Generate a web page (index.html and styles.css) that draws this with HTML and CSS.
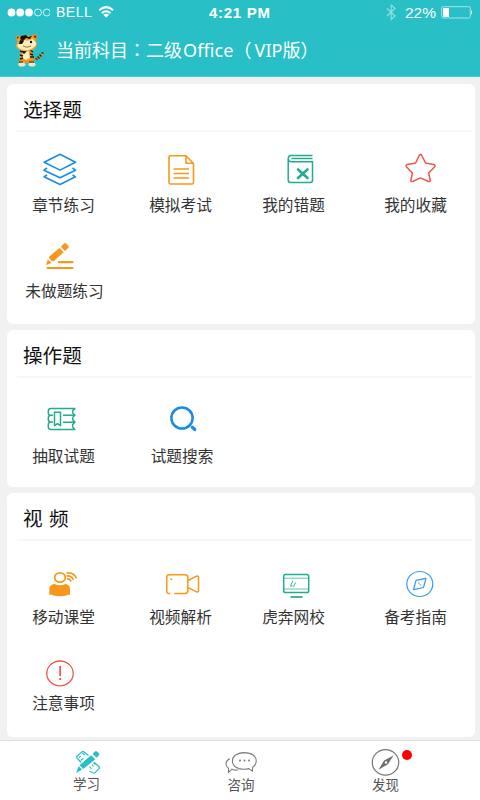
FILE: index.html
```html
<!DOCTYPE html>
<html lang="zh-CN">
<head>
<meta charset="utf-8">
<title>学习</title>
<link rel="stylesheet" href="styles.css">
</head>
<body>
<header class="header">
  <div class="status">
    <svg class="signal" viewBox="0 0 50 24" fill="#fff"><circle cx="11.500" cy="12.500" r="3.900"/><circle cx="20.200" cy="12.500" r="3.900"/><circle cx="29" cy="12.500" r="3.900"/><g fill="none" stroke="#fff" stroke-width=".8"><circle cx="38" cy="12.500" r="3.500"/><circle cx="46.800" cy="12.500" r="3.500"/></g></svg>
    <span class="carrier">BELL</span>
    <svg class="wifi" viewBox="98 0 18 24"><path d="M99.200 10.200q7-6.200 14 0M101.800 13.200q4.200-4 8.800 0" fill="none" stroke="#fff" stroke-width="2"/><path d="M103.300 14.800q2.900-2.200 5.800 0l-2.900 3z" fill="#fff"/></svg>
    <span class="time">4:21 PM</span>
    <svg class="bluetooth" viewBox="385 0 12 24"><path d="M387 8.500l8 7.500-3.800 3.500V5l3.800 3.500-8 7.500" fill="none" stroke="#8edfe3" stroke-width="1.200"/></svg>
    <span class="percent">22%</span>
    <svg class="battery" viewBox="440 0 34 24"><rect x="441.700" y="6.700" width="28.600" height="11.300" rx="1.500" fill="none" stroke="#a4e5e8"/><rect x="443" y="8" width="6" height="9" fill="#fff"/><path d="M471 10q2.300 2.300 0 4.500z" fill="#fff"/></svg>
  </div>
  <div class="subject">
    <svg class="mascot" viewBox="14 32 32 36">
      <path d="M34 59q4 1 9.500-6" fill="none" stroke="#e88a20" stroke-width="2"/><path d="M35.500 58.500l2 1m0-3l2 2m0-4l2 2m0-4l2 1" stroke="#261a10" stroke-width="1.300"/>
      <path d="M21 49h10l3 14H19z" fill="#ed9424"/><path d="M22.500 50h6l1.500 8-4 2-3.500-2z" fill="#fff0c0"/>
      <path d="M20 51l3 1m-3 3l3 1m-3 3l3-1m7-8l3 2m-3 2l3 1m-3 2l4 0m-12-7l2 3 3-3" stroke="#21160f" stroke-width="1.500"/>
      <ellipse cx="21.800" cy="64.500" rx="3.600" ry="2" fill="#f5e4c1"/><ellipse cx="32" cy="64.500" rx="3.600" ry="2" fill="#f5e4c1"/><path d="M19 62l4 0m6 0l5 0" stroke="#382010" stroke-width="1.200"/>
      <circle cx="18" cy="37.800" r="2.500" fill="#ec9323"/><circle cx="34.500" cy="37" r="3" fill="#ec9323"/><circle cx="18" cy="37.800" r="1.200" fill="#694522"/><circle cx="35" cy="37" r="1.400" fill="#694522"/>
      <path d="M18 38q8-6 17 0l2 6q-1 6-9 7-10 1-12-5z" fill="#f4a335"/><path d="M17 45q5-2 8-5 3 2 7-1 5 3 4 6-5 6-12 5-6-1-7-5z" fill="#ffefbc"/>
      <path d="M21 36l5-1 2 2 4-1-2 3-4-1-3 3-3-2zm-1 4l4 1-2 3h-3z" fill="#17110d"/><circle cx="31" cy="42" r="1.200" fill="#17110d"/><path d="M23 46q4 2.500 8 0" fill="none" stroke="#81502b" stroke-width=".8"/>
    </svg>
    <h1>当前科目<span class="punct" lang="zh-TW">：</span>二级<span class="latin">Office</span><span class="punct open" lang="zh-TW">（</span><span class="latin">VIP</span>版<span class="punct close" lang="zh-TW">）</span></h1>
  </div>
</header>

<main class="content">
  <section class="card card-choice">
    <h2>选择题</h2>
    <div class="grid">
      <div class="item"><svg viewBox="34 150 60 40" class="blue"><path d="M60 154.300l15.500 8-15.500 7.800-15.800-7.800zM47 168l-3 2.200 16 7.500 15.500-7.500-3-2.200M47 174.800l-3 2 16 7.700 15.500-7.700-3-2" stroke-width="1.600"/></svg><span>章节练习</span></div>
      <div class="item"><svg viewBox="151 150 60 40" class="orange"><path d="M186 155.700h-15.500q-1.500 0-1.500 1.500V182.500q0 1.500 1.500 1.500h21.500q1.500 0 1.500-1.500v-19zM186 155.700v7.600h7.500M173.500 169h15.500M173.500 173.500h15.500M173.500 178h15.500" stroke-width="1.600"/></svg><span>模拟考试</span></div>
      <div class="item"><svg viewBox="264 150 60 40" class="green"><path d="M312.500 155.600h-21q-3.300 0-3.300 3.300V180q0 2.500 2.500 2.500h19.600q2.200 0 2.200-2.200v-18.600h-21q-3.300 0-3.300-3M312.500 158.600h-21" stroke-width="1.500"/><path d="M298 169.500l9.500 8.500m0-8.500l-9.500 8.500" stroke-width="2.600" stroke-linecap="round"/></svg><span>我的错题</span></div>
      <div class="item"><svg viewBox="386 150 60 40" class="red"><path d="M419.200 155.500q1.300-2 2.600 0l3.700 7.500 8.300 1.500q2.100.8.700 2.400l-5.800 6.100 1.500 7.500q0 1.500-1.700 1l-8-3.600-8 3.600q-1.700.5-1.700-1l1.600-7.500-5.800-6.100q-1.400-1.600.7-2.400l8.300-1.500z" stroke-width="1.500"/></svg><span>我的收藏</span></div>
      <div class="item"><svg viewBox="34 236 60 40" class="orange"><g fill="#f7981d" stroke="none"><path d="M60.800 246.800l3.300-3.300q1-1 2 0l2.200 2.200q1 1 0 2l-3.300 3.300zM59.500 248l4.200 4.200-9.600 8.600q-1.200 1-2.500 0l-2.200-2.200q-1-1.200.2-2.400zM47.800 259.500l3.800 3.400-5.600 2z"/></g><path d="M59 262.200h13.500M47.500 268h25" stroke-width="2.200" stroke-linecap="round"/></svg><span class="wide">未做题练习</span></div>
    </div>
  </section>

  <section class="card card-practice">
    <h2>操作题</h2>
    <div class="grid">
      <div class="item"><svg viewBox="34 401 60 40" class="green"><path d="M75.500 408.500H51q-2.700 0-2.700 2.700v2q0 2 2.200 2h2M53 415.200h-2q-2.700 0-2.700 2.800v1.500q0 2.500 2.700 2.500h2m-2 0q-2.700 0-2.700 2.800v2q0 2.700 2.700 2.700h24.500M63 415.200h11.500M63 422.200h11.500M75 408.500q-5 3 0 6.700-5 3.200 0 7-5 3.800 0 7.300M54.500 412.300h6v13.400l-3-2-3 2z" stroke-width="1.500"/></svg><span>抽取试题</span></div>
      <div class="item"><svg viewBox="151 401 60 40" class="blue"><circle cx="182" cy="418" r="10.600" stroke-width="2.500"/><path d="M192.300 427.300l2.500 2.200" stroke-width="3.200" stroke-linecap="round"/></svg><span class="nudge">试题搜索</span></div>
    </div>
  </section>

  <section class="card card-video">
    <h2 class="spaced">视 频</h2>
    <div class="grid">
      <div class="item"><svg viewBox="34 562 60 40" class="orange"><ellipse cx="60" cy="577.500" rx="5.300" ry="4.700" stroke-width="1.800"/><path d="M54.500 584q5.500 2.600 11 0 4.500.8 4.500 5v5.800h-2.300v-4 4.500q-7.500 2-15.400 0v-4.500 4h-3v-5.800q0-4.200 5.200-5z" fill="#f7981d" stroke="none"/><path d="M66.500 573q7.500-1 10 5.500M66.500 576q5-.7 7 4M66.800 579q3-.6 4.200 2.600" stroke-width="1.600"/></svg><span>移动课堂</span></div>
      <div class="item"><svg viewBox="151 562 60 40" class="orange"><path d="M170.200 593.500h-1.200q-2.200 0-2.200-2.300v-14q0-2.500 2.500-2.500h16q2.500 0 2.500 2.500v13.500q0 2.700-2.500 2.700h-11M188 580.500l8.500-4.300q2-.8 2 1.500v12.800q0 2-2 1.300l-8.500-4.200" stroke-width="1.500"/><circle cx="171.300" cy="579.300" r="1" fill="#f7981d" stroke="none"/></svg><span>视频解析</span></div>
      <div class="item"><svg viewBox="264 562 60 40" class="green"><rect x="283.700" y="574.600" width="25" height="18" rx="1.800" stroke-width="1.500"/><path d="M284 578.200h24.500M284 589h24.500" stroke-width=".7"/><path d="M290.500 597h12" stroke-width="1.700"/><path d="M293 580.500l-2.500 5.500h2m3-3.500l-2 4.500" stroke-width=".9"/></svg><span>虎奔网校</span></div>
      <div class="item"><svg viewBox="386 562 60 40" class="lightblue"><ellipse cx="419.800" cy="584" rx="13" ry="12.500" stroke-width="1.200"/><path d="M416 580.300l10-2-2.500 9.200-10 2.200z" stroke-width="1.200"/><path d="M418 582.500l3.200 3" stroke-width=".9"/></svg><span>备考指南</span></div>
      <div class="item"><svg viewBox="34 648 60 40" class="red"><ellipse cx="60" cy="673.400" rx="13.200" ry="12.400" stroke-width="1.300"/><path d="M60.200 666v10.200" stroke-width="1.800"/><path d="M60.200 678v2" stroke-width="1.800"/></svg><span>注意事项</span></div>
    </div>
  </section>
</main>

<nav class="tabs">
  <div class="tab active"><svg viewBox="67 749 40 28"><path d="M81 762.500l-4.300-4.800q-.5-.8.200-1.400l5.300-4.600q.8-.6 1.500 0l4.800 3.800M89.500 771.300l3.800 1.700q1 .3 1.700-.4l4.200-4q.8-.8 0-1.600l-5-4.800M79 757.500l2-1.500m-.3 4.500l2.500-2.300m-.7-5.200l2.200 2M89.500 766.500l2 2.500m.5-4.500l1.500 2m0-4l1.500 2" fill="none" stroke="#29bfc6" stroke-width="1.200"/><path d="M92.500 753.800l2.500-2.200q1-1 2 0l2 1.800q.8 1 0 1.800l-2.500 2.600zM91 755.300l4.300 4-12 9.700-3.800-3.700zM78.600 766.300l3.500 3.300-6 3.400z" fill="#29bfc6"/></svg><span>学习</span></div>
  <div class="tab"><svg viewBox="221 749 40 28" fill="none" stroke="#7e7e7e" stroke-width="1.100"><path d="M238 769.800q-3 .8-6-.6l-3.500 3.300v-4.300q-2.800-2-2.500-5 .4-3 4-4.400"/><path d="M252.500 767.200v4l-3.800-2.600q-4.500 1.300-9.500 0-6.800-2-6.800-7.600 0-7.600 12-8.400 11.800.7 11.800 8.400 0 4-3.700 6.200z"/><g fill="#777" stroke="none"><circle cx="240" cy="760.500" r="1"/><circle cx="244.500" cy="760.500" r="1"/><circle cx="249" cy="760.500" r="1"/></g></svg><span>咨询</span></div>
  <div class="tab"><svg viewBox="366 749 40 28"><ellipse cx="385.500" cy="762.400" rx="13.200" ry="12.700" fill="none" stroke="#757575" stroke-width="1.200"/><path d="M393.500 755.500l-5.500 8.700-9.500 5.600 5.500-9.300z" fill="#707070"/><circle cx="386" cy="762.500" r="1.200" fill="#fff"/></svg><span>发现</span><i class="dot"></i></div>
</nav>
</body>
</html>
```
FILE: styles.css
```css
* { box-sizing: border-box; }
body {
  margin: 0;
  width: 480px;
  height: 800px;
  overflow: hidden;
  display: flex;
  flex-direction: column;
  background: #f1f1f1;
  font-family: "Noto Sans CJK SC", sans-serif;
}
svg { display: block; flex: none; }
.header { height: 77px; flex: none; background: #29bfc6; border-bottom: 1px solid #4ccbd0; color: #fff; }
.status {
  height: 24px;
  display: grid;
  grid-template-columns: 50px 48px 18px 93px 176px 20px 35px 40px;
  font-family: "Liberation Sans", sans-serif;
  line-height: 25px;
}
.signal { width: 50px; height: 24px; }
.carrier { padding-left: 6px; font-size: 14px; letter-spacing: 0.5px; }
.wifi { width: 18px; height: 24px; }
.time { grid-column: 5; font-size: 15px; font-weight: 700; letter-spacing: 0.7px; }
.bluetooth { width: 12px; height: 24px; }
.percent { font-size: 15.500px; }
.battery { width: 34px; height: 24px; }
.subject { height: 52px; display: flex; align-items: center; padding-left: 14px; }
.mascot { width: 32px; height: 36px; }
.subject h1 { margin: -1px 0 0 10px; font-size: 18px; font-weight: 400; line-height: 28px; white-space: nowrap; }
.latin { font-family: "Noto Sans", sans-serif; letter-spacing: 0.1px; margin-left: 1px; }
.punct { font-family: "Noto Sans CJK TC", sans-serif; }
.open { margin-right: 2px; }

.content { flex: 1; display: flex; flex-direction: column; gap: 6px; padding: 7px 5px 0 6.500px; }
.card { flex: none; background: #fff; border-radius: 6px; }
.card-choice { height: 240px; }
.card-practice { height: 157px; }
.card-video { height: 244px; }
.card h2 {
  margin: 0 3px 0 10px;
  padding-left: 6.500px;
  height: 48px;
  border-bottom: 2px solid #f7f7f7;
  font-size: 19.600px;
  font-weight: 400;
  line-height: 49px;
  color: #111;
}
.card h2.spaced { word-spacing: 2px; }
.grid { display: grid; grid-template-columns: 114px 120px 106px 138px; row-gap: 16px; padding-top: 18px; }
.card-practice .grid { padding-top: 23px; }
.card-video .grid { padding-top: 21px; }
.item { display: flex; flex-direction: column; align-items: center; }
.item svg { width: 60px; height: 40px; fill: none; stroke-linejoin: round; }
.item span { height: 30px; line-height: 29px; font-size: 15.700px; color: #333; white-space: nowrap; }
.item .wide { padding-left: 2px; }
.item .nudge { padding-left: 3px; }
.blue { stroke: #188be5; }
.lightblue { stroke: #359be8; }
.orange { stroke: #f7981d; }
.green { stroke: #21ac8e; }
.red { stroke: #f35449; }

.tabs {
  height: 60px;
  flex: none;
  display: grid;
  grid-template-columns: 173px 136px 153px;
  border-top: 1px solid #dedede;
  background: #fff;
}
.tab { position: relative; display: flex; flex-direction: column; align-items: center; padding-top: 8px; font-size: 13.500px; line-height: 20px; color: #555; }
.tab svg { width: 40px; height: 28px; }
.tab span { margin-top: -3px; }
.tab.active span { margin-top: -4px; }
.dot { position: absolute; left: 93px; top: 9px; width: 10px; height: 10px; border-radius: 50%; background: #f00; }
```
